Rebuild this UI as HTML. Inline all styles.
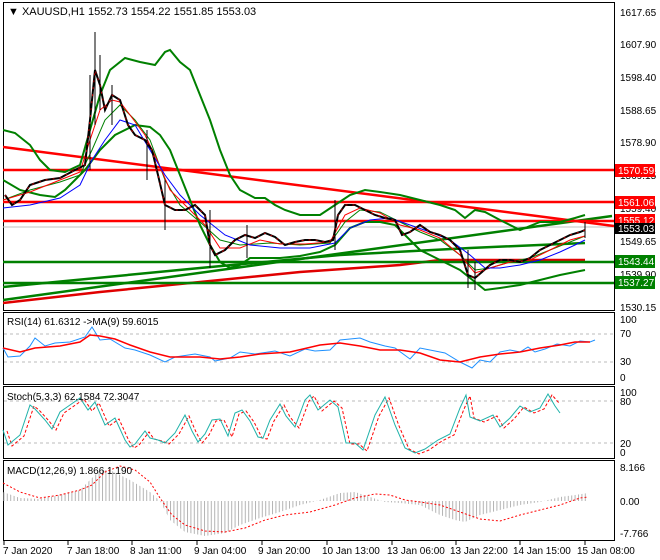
<!DOCTYPE html>
<html><head><meta charset="utf-8"><style>
html,body{margin:0;padding:0;background:#fff;}
svg{display:block;font-family:"Liberation Sans",sans-serif;}
</style></head><body>
<svg width="660" height="560" viewBox="0 0 660 560" xmlns="http://www.w3.org/2000/svg">
<defs>
<pattern id="hist" width="3.4" height="10" patternUnits="userSpaceOnUse"><rect x="0" y="0" width="1" height="10" fill="#b4b4b4"/></pattern>
<clipPath id="mc"><rect x="3" y="3" width="611" height="308"/></clipPath>
</defs>
<rect x="0" y="0" width="660" height="560" fill="#fff"/>
<!-- panels -->
<rect x="3.5" y="2.5" width="611" height="308" fill="none" stroke="#000"/>
<rect x="3.5" y="312.5" width="611" height="72" fill="none" stroke="#000"/>
<rect x="3.5" y="386.5" width="611" height="72" fill="none" stroke="#000"/>
<rect x="3.5" y="460.5" width="611" height="80" fill="none" stroke="#000"/>

<g clip-path="url(#mc)">
<line x1="3" y1="227" x2="614" y2="227" stroke="#c0c0c0" stroke-width="1"/>
<!-- trend lines -->
<polyline points="3,300 612,216" fill="none" stroke="#008000" stroke-width="2.5"/>
<polyline points="3,287 200,268 340,255 470,248 585,243" fill="none" stroke="#008000" stroke-width="2.5"/>
<polyline points="3,303 100,292 200,282 300,272 400,265 440,260 585,260" fill="none" stroke="#e00000" stroke-width="2.5"/>
<line x1="3" y1="147" x2="614" y2="226" stroke="#ff0000" stroke-width="2.5"/>
<line x1="3" y1="170" x2="614" y2="170" stroke="#ff0000" stroke-width="2.5"/>
<line x1="3" y1="202" x2="614" y2="202" stroke="#ff0000" stroke-width="2.5"/>
<line x1="3" y1="221" x2="614" y2="221" stroke="#ff0000" stroke-width="2.5"/>
<line x1="3" y1="262" x2="614" y2="262" stroke="#008000" stroke-width="2.5"/>
<line x1="3" y1="283" x2="614" y2="283" stroke="#008000" stroke-width="2.5"/>
<!-- bands -->
<polyline points="3,130 15,133 30,145 40,160 50,170 65,172 80,165 90,130 100,95 110,70 125,58 140,62 155,65 165,52 170,50 180,62 190,70 200,95 210,120 220,150 230,175 240,190 255,198 265,198 275,205 285,210 300,215 320,215 335,205 350,195 365,190 380,192 400,195 420,200 440,205 455,210 465,218 475,210 485,212 500,220 520,230 540,222 560,222 575,218 585,215" fill="none" stroke="#008000" stroke-width="2"/>
<polyline points="3,180 20,190 40,195 55,197 65,190 75,180 85,170 100,150 115,135 135,125 150,127 160,135 170,150 180,175 190,200 200,225 210,245 220,262 230,268 240,265 250,258 280,258 300,256 320,252 335,245 350,228 365,222 380,222 395,225 410,240 420,250 440,260 460,270 475,282 485,290 500,288 520,285 540,280 560,275 575,272 585,270" fill="none" stroke="#008000" stroke-width="2"/>
<polyline points="3,200 30,190 60,182 80,175 92,150 105,120 120,105 135,120 150,140 165,180 180,205 200,222 220,240 240,245 270,243 300,245 330,243 345,222 360,210 380,212 400,222 420,232 440,240 460,255 475,270 490,268 510,262 530,258 550,250 570,242 585,236" fill="none" stroke="#008000" stroke-width="1"/>
<polyline points="3,200 30,192 60,180 80,172 90,140 100,110 112,100 120,102 130,115 145,135 158,162 170,190 185,205 205,225 220,248 240,248 260,240 280,244 305,244 330,242 345,215 360,208 380,213 400,225 420,230 440,238 460,255 475,273 490,268 510,262 530,260 550,250 570,240 585,236" fill="none" stroke="#ff0000" stroke-width="1"/>
<polyline points="3,208 30,205 60,198 80,185 92,160 105,140 120,120 135,125 150,150 165,175 180,195 200,215 225,235 250,245 280,248 310,248 335,243 350,228 370,220 390,218 410,225 430,232 450,240 470,255 485,268 500,268 520,265 540,260 560,252 575,245 585,240" fill="none" stroke="#0000ff" stroke-width="1"/>
<!-- price -->
<g stroke="#000" stroke-width="1">
<line x1="95" y1="32" x2="95" y2="125"/><line x1="90" y1="75" x2="90" y2="170"/><line x1="100" y1="55" x2="100" y2="110"/><line x1="112" y1="85" x2="112" y2="125"/><line x1="147" y1="130" x2="147" y2="180"/><line x1="165" y1="180" x2="165" y2="230"/><line x1="210" y1="210" x2="210" y2="268"/><line x1="247" y1="225" x2="247" y2="258"/><line x1="335" y1="200" x2="335" y2="250"/><line x1="468" y1="250" x2="468" y2="288"/><line x1="475" y1="262" x2="475" y2="290"/><line x1="585" y1="222" x2="585" y2="238"/>
</g>
<polyline points="5,195 12,205 20,200 30,185 45,180 60,178 75,170 85,165 90,120 95,70 100,85 105,110 112,95 120,100 128,125 135,135 145,140 152,150 158,175 165,205 175,210 185,210 195,205 205,215 210,245 215,255 225,250 235,240 245,235 255,238 265,233 275,237 285,245 295,242 305,240 315,240 325,242 333,240 338,215 345,205 355,205 365,210 375,215 385,218 395,220 402,235 410,232 420,225 430,232 440,235 450,240 460,250 468,275 475,278 482,272 490,265 500,260 510,260 520,262 530,258 540,250 550,245 560,240 570,235 580,232 585,230" fill="none" stroke="#000" stroke-width="2"/>
<polyline points="5,195 12,205 20,200 30,185 45,180 60,178 75,170 85,165 90,120 95,70 100,85 105,110 112,95 120,100 128,125 135,135 145,140 152,150 158,175 165,205 175,210 185,210 195,205 205,215 210,245 215,255 225,250 235,240 245,235 255,238 265,233 275,237 285,245 295,242 305,240 315,240 325,242 333,240 338,215 345,205 355,205 365,210 375,215 385,218 395,220 402,235 410,232 420,225 430,232 440,235 450,240 460,250 468,275 475,278 482,272 490,265 500,260 510,260 520,262 530,258 540,250 550,245 560,240 570,235 580,232 585,230" fill="none" stroke="#c00000" stroke-width="1" stroke-dasharray="2 5"/>
</g>
<text x="8" y="15" font-size="11" fill="#000">▼ XAUUSD,H1  1552.73 1554.22 1551.85 1553.03</text>

<!-- price axis -->
<g font-size="10" fill="#000">
<text x="620" y="16">1617.65</text><text x="620" y="48">1607.90</text><text x="620" y="81">1598.40</text><text x="620" y="114">1588.65</text><text x="620" y="146">1578.90</text><text x="620" y="179">1569.15</text><text x="620" y="212">1559.40</text><text x="620" y="245">1549.65</text><text x="620" y="278">1539.90</text><text x="620" y="311">1530.15</text>
</g>
<g font-size="10">
<rect x="615" y="164" width="40" height="13" fill="#ff0000"/><text x="618" y="174" fill="#fff">1570.59</text>
<rect x="615" y="196" width="40" height="13" fill="#ff0000"/><text x="618" y="206" fill="#fff">1561.06</text>
<rect x="615" y="214" width="40" height="13" fill="#ff0000"/><text x="618" y="224" fill="#fff">1555.12</text>
<rect x="615" y="223" width="40" height="11" fill="#000"/><text x="618" y="232" fill="#fff">1553.03</text>
<rect x="615" y="255" width="40" height="13" fill="#008000"/><text x="618" y="265" fill="#fff">1543.44</text>
<rect x="615" y="276" width="40" height="13" fill="#008000"/><text x="618" y="286" fill="#fff">1537.27</text>
</g>

<!-- RSI -->
<line x1="4" y1="334" x2="614" y2="334" stroke="#bbb" stroke-dasharray="3 3"/>
<line x1="4" y1="362" x2="614" y2="362" stroke="#bbb" stroke-dasharray="3 3"/>
<polyline points="3,348 8,357 20,356 30,346 35,338 45,346 55,343 70,342 85,337 92,327 100,340 110,339 125,348 135,350 150,355 165,362 175,357 195,354 210,357 215,361 230,358 240,352 255,354 275,351 290,356 305,349 315,351 330,350 340,340 350,339 360,338 370,342 385,346 395,348 410,359 420,348 435,351 445,353 460,362 472,368 480,360 490,362 500,352 510,350 520,352 528,347 535,352 545,349 557,344 570,346 580,341 590,342 595,340" fill="none" stroke="#1e90ff" stroke-width="1"/>
<polyline points="3,348 20,352 35,348 60,346 80,342 90,335 100,336 115,339 130,345 150,352 170,357 200,357 220,359 240,357 260,354 290,352 320,345 340,343 360,346 380,350 400,350 420,353 440,360 460,362 480,357 500,354 520,352 540,348 560,345 575,342 590,342" fill="none" stroke="#ff0000" stroke-width="1.5"/>
<text x="7" y="325" font-size="10">RSI(14) 61.6312  -&gt;MA(9) 59.6015</text>
<g font-size="10"><text x="620" y="323">100</text><text x="620" y="337">70</text><text x="620" y="365">30</text><text x="620" y="381">0</text></g>

<!-- Stoch -->
<line x1="4" y1="401" x2="614" y2="401" stroke="#bbb" stroke-dasharray="3 3"/>
<line x1="4" y1="443" x2="614" y2="443" stroke="#bbb" stroke-dasharray="3 3"/>
<polyline transform="translate(4,1)" points="3,430 8,445 20,435 30,405 35,409 45,420 52,429 60,412 70,405 80,398 88,410 95,402 105,425 115,418 125,440 130,447 135,444 145,431 150,438 158,440 165,443 175,433 185,415 192,431 198,442 205,434 212,420 220,419 228,436 235,413 242,410 250,421 258,437 263,438 270,420 280,404 286,416 295,427 305,400 310,395 318,410 330,400 338,407 346,443 355,443 363,450 375,415 385,397 395,425 405,448 415,453 425,449 438,440 450,434 460,408 466,395 470,417 480,421 493,415 500,427 510,418 520,406 530,412 540,408 548,394 555,402" fill="none" stroke="#ff0000" stroke-width="1" stroke-dasharray="3 2"/>
<polyline points="3,430 8,445 20,435 30,405 35,409 45,420 52,429 60,412 70,405 80,398 88,410 95,402 105,425 115,418 125,440 130,447 135,444 145,431 150,438 158,440 165,443 175,433 185,415 192,431 198,442 205,434 212,420 220,419 228,436 235,413 242,410 250,421 258,437 263,438 270,420 280,404 286,416 295,427 305,400 310,395 318,410 330,400 338,407 346,443 355,443 363,450 375,415 385,397 395,425 405,448 415,453 425,449 438,440 450,434 460,408 466,395 470,417 480,421 493,415 500,427 510,418 520,406 530,412 540,408 548,394 555,406 560,413" fill="none" stroke="#20b2aa" stroke-width="1"/>
<text x="7" y="400" font-size="10">Stoch(5,3,3) 62.1584 72.3047</text>
<g font-size="10"><text x="620" y="396">100</text><text x="620" y="405">80</text><text x="620" y="447">20</text><text x="620" y="456">0</text></g>

<!-- MACD -->
<polygon points="3,501 3,492 20,498 40,499 60,495 80,490 92,478 100,470 110,470 130,480 150,492 160,501 170,520 185,532 205,536 225,533 240,525 260,518 280,512 300,505 320,500 340,493 355,492 370,497 385,502 400,503 420,505 440,515 455,520 465,522 480,515 500,510 520,505 540,502 560,497 575,495 588,493 588,501" fill="url(#hist)"/>
<polyline points="3,483 20,492 40,498 60,495 80,490 92,485 105,472 120,466 135,470 150,482 160,498 172,515 185,525 205,531 225,532 245,528 265,520 285,515 310,512 335,505 355,498 375,494 390,495 405,500 420,502 440,505 460,512 480,519 500,521 520,515 540,510 560,505 580,498 588,497" fill="none" stroke="#ff0000" stroke-width="1" stroke-dasharray="2 2"/>
<text x="7" y="474" font-size="10">MACD(12,26,9) 1.866 1.190</text>
<g font-size="10"><text x="620" y="471">8.166</text><text x="620" y="505">0.00</text><text x="620" y="537">-7.766</text></g>

<!-- time axis -->
<g stroke="#000"><line x1="4" y1="541" x2="4" y2="545"/><line x1="68" y1="541" x2="68" y2="545"/><line x1="132" y1="541" x2="132" y2="545"/><line x1="197" y1="541" x2="197" y2="545"/><line x1="262" y1="541" x2="262" y2="545"/><line x1="327" y1="541" x2="327" y2="545"/><line x1="392" y1="541" x2="392" y2="545"/><line x1="456" y1="541" x2="456" y2="545"/><line x1="520" y1="541" x2="520" y2="545"/><line x1="585" y1="541" x2="585" y2="545"/></g>
<g font-size="10">
<text x="3" y="554">7 Jan 2020</text><text x="67" y="554">7 Jan 18:00</text><text x="130" y="554">8 Jan 11:00</text><text x="194" y="554">9 Jan 04:00</text><text x="258" y="554">9 Jan 20:00</text><text x="322" y="554">10 Jan 13:00</text><text x="387" y="554">13 Jan 06:00</text><text x="450" y="554">13 Jan 22:00</text><text x="513" y="554">14 Jan 15:00</text><text x="577" y="554">15 Jan 08:00</text>
</g>
</svg>
</body></html>
